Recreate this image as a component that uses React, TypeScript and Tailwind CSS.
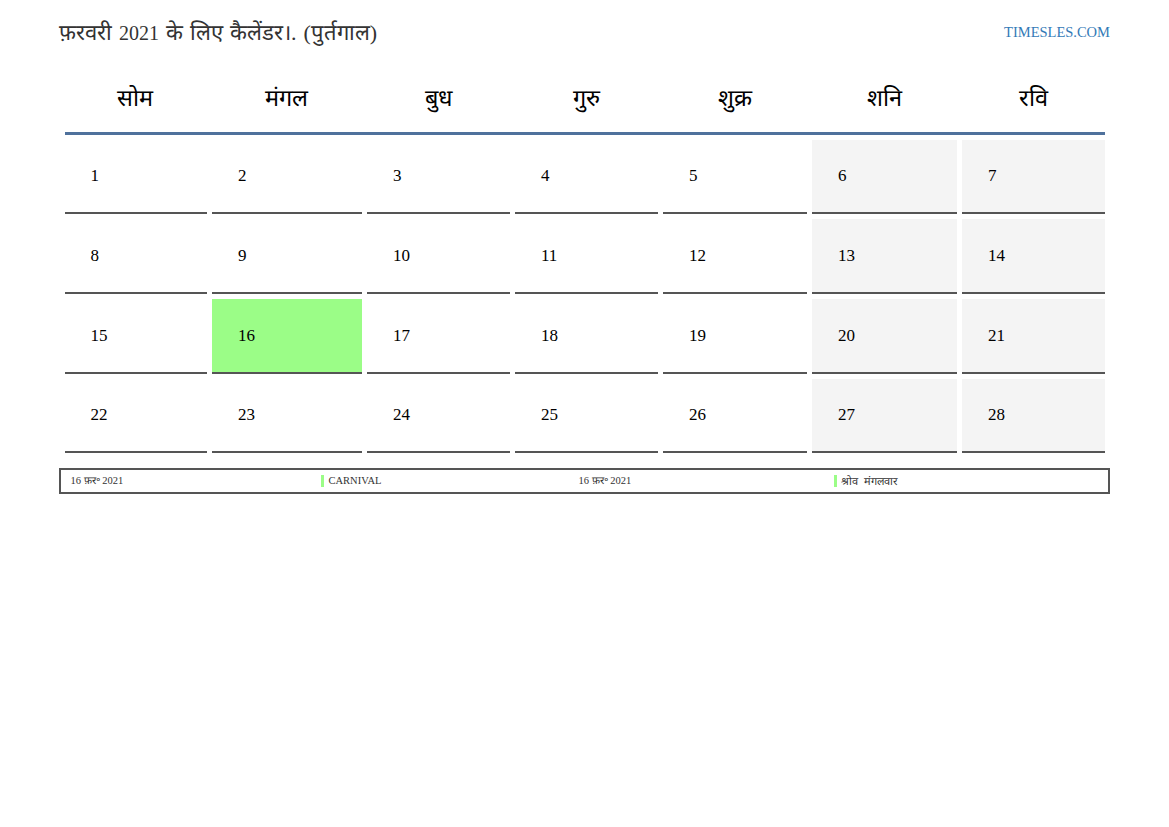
const days = ['सोम', 'मंगल', 'बुध', 'गुरु', 'शुक्र', 'शनि', 'रवि'];
const weeks = [
  [1, 2, 3, 4, 5, 6, 7],
  [8, 9, 10, 11, 12, 13, 14],
  [15, 16, 17, 18, 19, 20, 21],
  [22, 23, 24, 25, 26, 27, 28],
];

const cols = 'grid grid-cols-[142.5px_150px_143px_143px_144px_145px_143px] gap-x-[5px]';

function Cell({ day, col }: { day: number; col: number }) {
  const weekend = col >= 5;
  const today = day === 16;
  return (
    <div
      className={`h-[74.7px] pl-[26px] pt-[25.8px] border-b-2 border-[#555] text-[17px] leading-[22px] text-black ${
        today ? 'bg-[#9bfd87]' : weekend ? 'bg-[#f4f4f4]' : 'bg-white'
      }`}
    >
      {day}
    </div>
  );
}

export default function App() {
  return (
    <div className="w-[1169px] h-[827px] bg-white px-[59px] font-['Liberation_Serif',serif]">
      <div className="flex items-center justify-between h-[64px]">
        <h1 className="text-[22px] text-[#333] [word-spacing:1.5px]">
          फ़रवरी <span className="text-[20px]">2021</span> के लिए कैलेंडर।. (पुर्तगाल)
        </h1>
        <a className="pt-[2px] text-[14.5px] text-[#337ab7]">TIMESLES.COM</a>
      </div>
      <div className="pl-[5.5px] pr-[5px]">
        <div className={`${cols} h-[70.5px] items-center pt-[2px] border-b-[3px] border-[#4f719c]`}>
          {days.map((d) => (
            <div key={d} className="pr-[1px] text-center text-[23.5px] text-black">
              {d}
            </div>
          ))}
        </div>
        <div className="flex flex-col gap-[5px] mt-[5px]">
          {weeks.map((w, i) => (
            <div key={i} className={cols}>
              {w.map((d, j) => (
                <Cell key={d} day={d} col={j} />
              ))}
            </div>
          ))}
        </div>
      </div>
      <div className="mt-[15px] h-[26px] border-2 border-[#555] pl-[9.5px] grid grid-cols-[250px_258px_255px_1fr] items-center text-[10.5px] text-[#333]">
        <span>16 फ़र॰ 2021</span>
        <span className="border-l-[3px] border-[#9bfd87] pl-[5px] leading-[12px]">CARNIVAL</span>
        <span>16 फ़र॰ 2021</span>
        <span className="border-l-[3px] border-[#9bfd87] pl-[4.5px] leading-[12px] text-[11px] [word-spacing:3px]">श्रोव मंगलवार</span>
      </div>
    </div>
  );
}
